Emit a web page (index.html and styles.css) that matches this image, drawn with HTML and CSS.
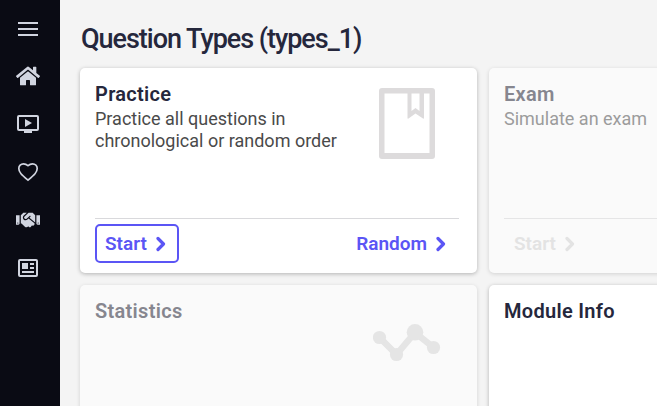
FILE: index.html
```html
<!DOCTYPE html>
<html lang="en">
<head>
<meta charset="utf-8">
<title>Question Types</title>
<link rel="stylesheet" href="styles.css">
</head>
<body>
<nav class="sidebar">
  <svg viewBox="0 0 24 24"><path d="M2 5h20v2H2zM2 11h20v2H2zM2 17h20v2H2z"/></svg>
  <svg viewBox="0 -32 576 576"><path d="M280.37 148.26L96 300.11V464a16 16 0 0 0 16 16l112.06-.29a16 16 0 0 0 15.92-16V368a16 16 0 0 1 16-16h64a16 16 0 0 1 16 16v95.64a16 16 0 0 0 16 16.05L464 480a16 16 0 0 0 16-16V300L295.67 148.26a12.19 12.19 0 0 0-15.3 0zM571.6 251.47L488 182.56V44.05a12 12 0 0 0-12-12h-56a12 12 0 0 0-12 12v72.61L318.47 43a48 48 0 0 0-61 0L4.34 251.47a12 12 0 0 0-1.6 16.9l25.5 31A12 12 0 0 0 45.15 301l235.22-193.74a12.19 12.19 0 0 1 15.3 0L530.9 301a12 12 0 0 0 16.9-1.6l25.5-31a12 12 0 0 0-1.7-16.93z"/></svg>
  <svg viewBox="0 0 24 24"><path fill-rule="evenodd" d="M3 3h18a2 2 0 0 1 2 2v12a2 2 0 0 1-2 2h-5v2H8v-2H3a2 2 0 0 1-2-2V5a2 2 0 0 1 2-2zm0 2v12h18V5zM9 7l7 4-7 4z"/></svg>
  <svg viewBox="0 0 24 24"><path class="outline" d="M12 20.2C5.6 14.7 2.8 12.2 2.8 8.5c0-2.700 2-4.700 4.700-4.700 1.800 0 3.300.8 4.500 1.900 1.200-1.100 2.700-1.900 4.500-1.900 2.700 0 4.700 2 4.700 4.700 0 3.700-2.800 6.200-9.200 11.700z"/></svg>
  <svg viewBox="0 -64 640 640"><path d="M434.7 64h-85.9c-8 0-15.7 3-21.6 8.4l-98.3 90c-.1.1-.2.3-.3.4-16.6 15.6-16.3 40.5-2.1 56 12.7 13.9 39.4 17.6 56.1 2.7.1-.1.3-.1.4-.2l79.9-73.2c6.5-5.9 16.7-5.5 22.6 1 6 6.5 5.5 16.6-1 22.6l-26.1 23.9L504 313.8c2.9 2.4 5.5 5 7.9 7.7V128l-54.6-54.6c-5.9-6-14.1-9.4-22.6-9.4zM544 128.2v223.9c0 17.7 14.3 32 32 32h64V128.2h-96zm48 223.9c-8.8 0-16-7.2-16-16s7.2-16 16-16 16 7.2 16 16-7.2 16-16 16zM0 384h64c17.7 0 32-14.3 32-32V128.2H0V384zm48-63.9c8.8 0 16 7.2 16 16s-7.2 16-16 16-16-7.2-16-16c0-8.9 7.2-16 16-16zm435.9 18.6L334.6 217.5l-30 27.5c-29.7 27.1-75.2 24.5-101.7-4.4-26.9-29.4-24.8-74.9 4.4-101.7L289.1 64h-83.8c-8.5 0-16.6 3.4-22.6 9.4L128 128v223.9h18.3l90.5 81.9c27.4 22.3 67.7 18.1 90-9.3l.2-.2 17.9 15.5c15.9 13 39.4 10.5 52.3-5.4l31.4-38.6 5.4 4.4c13.7 11.1 33.9 9.1 45-4.7l9.5-11.7c11.2-13.8 9.1-33.9-4.6-45.1z"/></svg>
  <svg viewBox="0 0 24 24"><path fill-rule="evenodd" d="M4 3h16a2 2 0 0 1 2 2v14a2 2 0 0 1-2 2H4a2 2 0 0 1-2-2V5a2 2 0 0 1 2-2zm0 2v14h16V5zM6 7h6v6H6zM14 7h4v2h-4zM14 11h4v2h-4zM6 15h12v2H6z"/></svg>
</nav>
<main class="content">
  <h1>Question Types (types_1)</h1>
  <div class="grid">
    <section class="card">
      <div class="body">
        <div class="copy"><h2>Practice</h2><p>Practice all questions in chronological or random order</p></div>
        <svg class="book" viewBox="0 0 56 71"><path fill-rule="evenodd" d="M3 0h50a3 3 0 0 1 3 3v65a3 3 0 0 1-3 3H3a3 3 0 0 1-3-3V3a3 3 0 0 1 3-3zm2.500 5.500v59.500h45V5.500h-5.500v24.500q0 1-1 .5l-7.500-5-7 5q-1 .5-1-.5V5.500zM32.500 5.500v17.500l4-3 4 3V5.500z"/></svg>
      </div>
      <div class="actions">
        <a class="action focused">Start<svg viewBox="0 0 10 16"><path d="M2 2.500l5.500 5.500L2 13.500"/></svg></a>
        <a class="action">Random<svg viewBox="0 0 10 16"><path d="M2 2.500l5.500 5.500L2 13.500"/></svg></a>
      </div>
    </section>
    <section class="card disabled">
      <div class="body"><div class="copy"><h2>Exam</h2><p>Simulate an exam</p></div></div>
      <div class="actions">
        <a class="action">Start<svg viewBox="0 0 10 16"><path d="M2 2.500l5.500 5.500L2 13.500"/></svg></a>
      </div>
    </section>
    <section class="card disabled">
      <div class="body">
        <div class="copy"><h2>Statistics</h2></div>
        <svg class="chart" viewBox="0 0 68 38"><path d="M6.500 13.500l17 17L42 8.500l18.500 15"/><circle cx="6.500" cy="13.500" r="6.600"/><circle cx="23.500" cy="30.500" r="6.600"/><circle cx="42" cy="8.300" r="8.300"/><circle cx="60.500" cy="23.500" r="6.600"/></svg>
      </div>
    </section>
    <section class="card">
      <div class="body"><div class="copy"><h2>Module Info</h2></div></div>
    </section>
  </div>
</main>
</body>
</html>
```
FILE: styles.css
```css
* { box-sizing: border-box; }
body {
  margin: 0;
  height: 100vh;
  display: flex;
  overflow: hidden;
  background: #f4f4f4;
  font-family: Roboto, sans-serif;
  color: #25273c;
}
.sidebar {
  width: 60px;
  flex: none;
  padding: 17px 4px 0 0;
  display: flex;
  flex-direction: column;
  align-items: center;
  gap: 24px;
  background: #0a0b14;
}
.sidebar svg { width: 24px; height: 24px; flex: none; fill: #d1d5e0; }
.sidebar svg:first-child { margin-bottom: -1px; }
.sidebar .outline { fill: none; stroke: #d1d5e0; stroke-width: 1.700; }
.content { flex: 1; min-width: 0; overflow: hidden; padding: 23px 0 0 20px; }
h1 {
  margin: 0 0 13px;
  padding-left: 1px;
  font-size: 27px;
  line-height: 32px;
  font-weight: 500;
  letter-spacing: -1.03px;
}
.grid {
  display: grid;
  grid-template-columns: 397px 397px;
  grid-auto-rows: 205px;
  gap: 12px;
}
.card {
  display: flex;
  flex-direction: column;
  padding: 14px 18px 10px 15px;
  border-radius: 5px;
  background: #fff;
  box-shadow: 0 1px 4px rgba(0, 0, 0, .27);
}
.body { flex: 1; display: flex; justify-content: space-between; }
.copy { width: 260px; }
h2 {
  margin: 0 0 2px;
  font-size: 20px;
  line-height: 24px;
  font-weight: 600;
  letter-spacing: .3px;
}
p { margin: 0; font-size: 18px; line-height: 22px; color: #4a4a4a; }
.book { width: 56px; height: 71px; margin: 6px 24.5px 0 0; fill: #dddbdc; }
.chart { width: 68px; height: 38px; margin: 25px 18px 0 0; fill: #cfcfcf; }
.chart path { fill: none; stroke: #cfcfcf; stroke-width: 6.5; }
.actions {
  display: flex;
  justify-content: space-between;
  padding-top: 5px;
  border-top: 1px solid #d9d9dc;
}
.action {
  display: flex;
  align-items: center;
  gap: 9px;
  height: 39px;
  padding: 0 11px 0 8px;
  border: 2px solid transparent;
  border-radius: 5px;
  color: #5b55f5;
  font-size: 19px;
  font-weight: 600;
}
.action svg { width: 10px; height: 16px; }
.action path {
  fill: none;
  stroke: currentColor;
  stroke-width: 3.2;
  stroke-linecap: round;
  stroke-linejoin: round;
}
.focused { border-color: #5b55f5; }
.disabled { background: #fafafa; box-shadow: 0 1px 4px rgba(0, 0, 0, .14); }
.disabled h2 { color: #86868f; }
.disabled p { color: #9c9c9c; }
.disabled .actions { border-color: #e5e5e6; }
.disabled .action { color: #e3e3e3; }
.disabled .chart { fill: #e5e5e5; }
.disabled .chart path { stroke: #e5e5e5; }
```
